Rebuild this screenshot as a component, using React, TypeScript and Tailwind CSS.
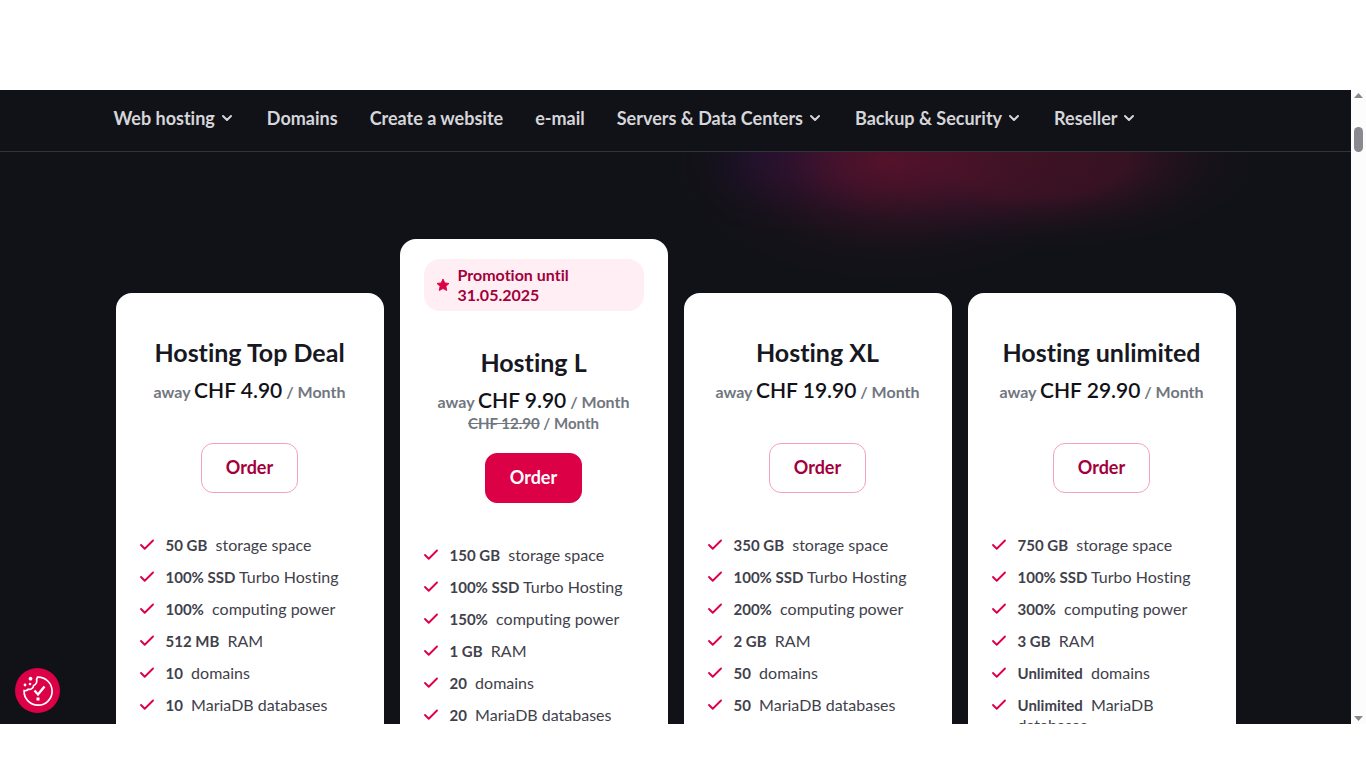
import React from 'react'
import { ChevronDown, Check } from 'lucide-react'

interface Feature {
  value: string
  label: string
  tight?: boolean
}

interface Plan {
  name: string
  price: string
  oldPrice?: string
  promotion?: string
  features: Feature[]
}

const navItems = [
  { label: 'Web hosting', menu: true },
  { label: 'Domains', menu: false },
  { label: 'Create a website', menu: false },
  { label: 'e-mail', menu: false },
  { label: 'Servers & Data Centers', menu: true },
  { label: 'Backup & Security', menu: true },
  { label: 'Reseller', menu: true }
]

const buildFeatures = (
  storage: string,
  power: string,
  ram: string,
  domains: string,
  databases: string
): Feature[] => [
  { value: storage, label: 'storage space' },
  { value: '100% SSD', label: 'Turbo Hosting', tight: true },
  { value: power, label: 'computing power' },
  { value: ram, label: 'RAM' },
  { value: domains, label: 'domains' },
  { value: databases, label: 'MariaDB databases' }
]

const plans: Plan[] = [
  {
    name: 'Hosting Top Deal',
    price: 'CHF 4.90',
    features: buildFeatures('50 GB', '100%', '512 MB', '10', '10')
  },
  {
    name: 'Hosting L',
    price: 'CHF 9.90',
    oldPrice: 'CHF 12.90',
    promotion: 'Promotion until 31.05.2025',
    features: buildFeatures('150 GB', '150%', '1 GB', '20', '20')
  },
  {
    name: 'Hosting XL',
    price: 'CHF 19.90',
    features: buildFeatures('350 GB', '200%', '2 GB', '50', '50')
  },
  {
    name: 'Hosting unlimited',
    price: 'CHF 29.90',
    features: buildFeatures('750 GB', '300%', '3 GB', 'Unlimited', 'Unlimited')
  }
]

const NavBar: React.FC = () => (
  <header className="relative border-b border-[#323338] bg-[#111217]">
    <nav className="mx-auto flex h-[61px] max-w-[1124px] items-center gap-8 pb-1.5">
      {navItems.map((item) => (
        <a
          key={item.label}
          href="#"
          className="flex items-center gap-1 whitespace-nowrap text-lg leading-6 font-bold text-[#d5d6db]"
        >
          {item.label}
          {item.menu && <ChevronDown className="h-4 w-4" strokeWidth={3} />}
        </a>
      ))}
    </nav>
  </header>
)

const PlanCard: React.FC<{ plan: Plan }> = ({ plan }) => {
  const promoted = Boolean(plan.promotion)

  return (
    <article
      className={`rounded-2xl bg-white px-6 pb-10 ${promoted ? 'pt-5' : 'mt-[54px] pt-11'}`}
    >
      {promoted && (
        <div className="mb-9 flex items-center gap-2 rounded-2xl bg-[#ffeff4] px-3 py-1.5">
          <svg viewBox="0 0 24 24" className="h-3.5 w-3.5 shrink-0" fill="#dc0046" aria-hidden="true">
            <path
              d="M12 1.8l3.1 6.6 7.2.9-5.3 5 1.4 7.2L12 18l-6.4 3.5L7 14.300l-5.300-5 7.200-.900z"
              stroke="#dc0046"
              strokeWidth="1.500"
              strokeLinejoin="round"
            />
          </svg>
          <p className="w-36 text-base leading-5 font-bold text-[#a3003b]">{plan.promotion}</p>
        </div>
      )}

      <div className="flex flex-col items-center">
        <h2 className="text-[25px] leading-[30px] font-bold whitespace-nowrap text-[#171821]">{plan.name}</h2>
        <p className="mt-3 text-base leading-[22px] font-bold whitespace-nowrap text-[#717680]">
          away <span className="text-[21px] font-semibold text-[#111217]">{plan.price}</span> / Month
        </p>
        <p className="h-5 text-[15px] leading-5 font-bold text-[#717680]">
          {plan.oldPrice && (
            <>
              <s>{plan.oldPrice}</s> / Month
            </>
          )}
        </p>
        <button
          type="button"
          className={`mt-5 h-[50px] w-[97px] rounded-xl border pb-0.5 text-lg font-bold ${
            promoted
              ? 'border-[#dc0046] bg-[#dc0046] text-white'
              : 'border-[#f5a0c3] bg-white text-[#a3003b]'
          }`}
        >
          Order
        </button>
      </div>

      <ul className="mt-[42px] space-y-3">
        {plan.features.map((feature) => (
          <li key={feature.label} className="flex gap-2.5 text-base leading-5 text-[#3f414b]">
            <Check className="-ml-0.5 h-5 w-[18px] shrink-0 text-[#dc0046]" strokeWidth={2.5} />
            <span>
              <strong className="text-[15px] font-bold">{feature.value}</strong>
              {feature.tight ? ' ' : '\u00a0 '}
              {feature.label}
            </span>
          </li>
        ))}
      </ul>
    </article>
  )
}

const CookieButton: React.FC = () => (
  <button
    type="button"
    aria-label="Cookie settings"
    className="absolute bottom-[11px] left-[15px] flex h-[45px] w-[45px] items-center justify-center rounded-full bg-[#dc0046]"
  >
    <svg viewBox="0 0 45 45" className="h-full w-full" fill="none" stroke="#fff" strokeWidth="1.700">
      <path d="M22.500 9.200A14 14 0 1 1 9.100 22.700c2.300.3 3.400-.5 4-1.500 2.700.7 5.300-.9 5.500-3.700 2.600-1 3.600-3.500 3-6.200z" />
      <path d="M19.500 22.500l3.500 4 6.500-8" strokeWidth="2.400" />
      <circle cx="15.500" cy="10.700" r="1.900" fill="#fff" stroke="none" />
      <circle cx="15" cy="16" r="1.300" fill="#fff" stroke="none" />
      <circle cx="10" cy="17" r="1.400" fill="#fff" stroke="none" />
      <rect x="21.500" y="29.500" width="3" height="3" fill="#fff" stroke="none" />
    </svg>
  </button>
)

const Scrollbar: React.FC = () => (
  <div className="flex w-[15px] shrink-0 flex-col items-center bg-[#fcfcfc] py-[3px]" aria-hidden="true">
    <svg viewBox="0 0 9 5" className="h-[5px] w-[9px]" fill="#8b8990">
      <path d="M0 5L4.500 0 9 5z" />
    </svg>
    <div className="mt-[29px] h-[25px] w-[9px] rounded-full bg-[#8b8990]" />
    <svg viewBox="0 0 9 5" className="mt-auto h-[5px] w-[9px]" fill="#8b8990">
      <path d="M0 0h9L4.500 5z" />
    </svg>
  </div>
)

export default function App() {
  return (
    <div className="flex h-screen flex-col bg-white pt-[90px] pb-11 font-['Lato','Open_Sans',sans-serif] [font-variant-ligatures:none]">
      <div className="flex min-h-0 flex-1">
        <div className="relative flex min-w-0 flex-1 flex-col overflow-hidden bg-[#111217]">
          <NavBar />
          <main className="relative min-h-0 flex-1 overflow-hidden">
            {/* Background glow */}
            <div className="absolute -top-6 left-[54%] h-14 w-36 rounded-full bg-[#2a1060] opacity-40 blur-xl" />
            <div className="absolute -top-28 left-1/2 h-60 w-[430px] bg-[radial-gradient(closest-side,#5a1229_0%,#54122cc0_25%,#4a122e60_50%,#3a122e20_75%,#3a122e00_100%)]" />
            <div className="absolute -top-20 left-[61%] h-44 w-[430px] bg-[radial-gradient(closest-side,#5a122990_0%,#54122c90_40%,#4a122e50_60%,#3a122e20_80%,#3a122e00_100%)]" />

            <div className="relative mx-auto grid max-w-[1120px] grid-cols-4 gap-4 pt-[87px]">
              {plans.map((plan) => (
                <PlanCard key={plan.name} plan={plan} />
              ))}
            </div>
          </main>
          <CookieButton />
        </div>
        <Scrollbar />
      </div>
    </div>
  )
}
